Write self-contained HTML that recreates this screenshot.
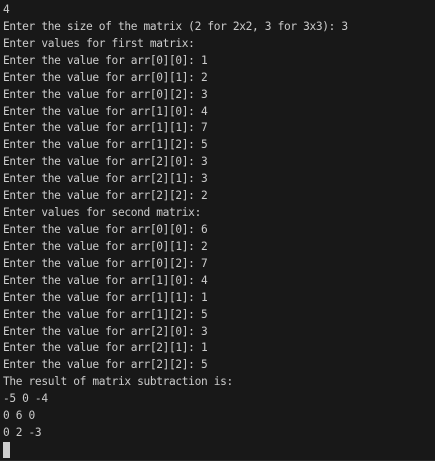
<!DOCTYPE html>
<html><head><meta charset="utf-8"><style>
html,body{margin:0;padding:0;background:#181818;width:435px;height:461px;overflow:hidden}
pre{margin:0;padding:2px 0 0 3px;font-family:"DejaVu Sans Mono",monospace;font-size:11.2px;letter-spacing:-0.35px;line-height:16.92px;color:#cccccc;white-space:pre}
.cur{display:inline-block;width:7px;height:16px;background:#cccccc;vertical-align:top;margin-top:0px}
.b{position:absolute;left:0;bottom:0;width:435px;height:1px;background:#2b2b2b}
</style></head><body><pre>4
Enter the size of the matrix (2 for 2x2, 3 for 3x3): 3
Enter values for first matrix:
Enter the value for arr[0][0]: 1
Enter the value for arr[0][1]: 2
Enter the value for arr[0][2]: 3
Enter the value for arr[1][0]: 4
Enter the value for arr[1][1]: 7
Enter the value for arr[1][2]: 5
Enter the value for arr[2][0]: 3
Enter the value for arr[2][1]: 3
Enter the value for arr[2][2]: 2
Enter values for second matrix:
Enter the value for arr[0][0]: 6
Enter the value for arr[0][1]: 2
Enter the value for arr[0][2]: 7
Enter the value for arr[1][0]: 4
Enter the value for arr[1][1]: 1
Enter the value for arr[1][2]: 5
Enter the value for arr[2][0]: 3
Enter the value for arr[2][1]: 1
Enter the value for arr[2][2]: 5
The result of matrix subtraction is:
-5 0 -4
0 6 0
0 2 -3
<span class="cur"></span></pre><div class="b"></div></body></html>
